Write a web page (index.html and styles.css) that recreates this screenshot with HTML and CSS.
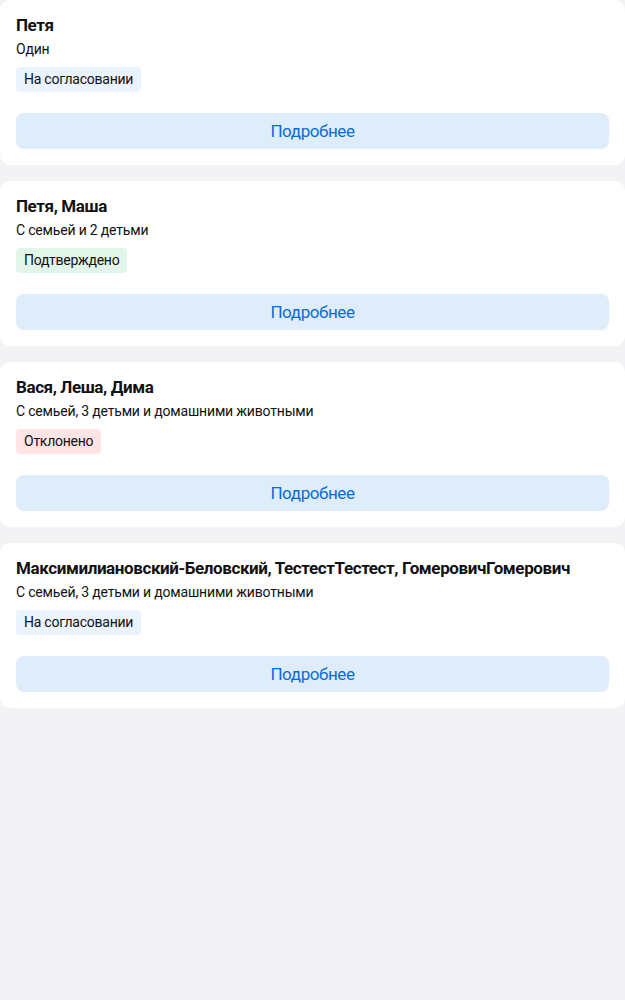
FILE: index.html
```html
<!DOCTYPE html>
<html lang="ru">
<head>
<meta charset="utf-8">
<link rel="stylesheet" href="styles.css">
</head>
<body>
<div class="list">
  <div class="card">
    <div class="title">Петя</div>
    <div class="sub">Один</div>
    <div><span class="badge pending">На согласовании</span></div>
    <button class="more">Подробнее</button>
  </div>
  <div class="card">
    <div class="title">Петя, Маша</div>
    <div class="sub">С семьей и 2 детьми</div>
    <div><span class="badge ok">Подтверждено</span></div>
    <button class="more">Подробнее</button>
  </div>
  <div class="card">
    <div class="title">Вася, Леша, Дима</div>
    <div class="sub">С семьей, 3 детьми и домашними животными</div>
    <div><span class="badge rejected">Отклонено</span></div>
    <button class="more">Подробнее</button>
  </div>
  <div class="card">
    <div class="title">Максимилиановский-Беловский, ТестестТестест, ГомеровичГомерович</div>
    <div class="sub">С семьей, 3 детьми и домашними животными</div>
    <div><span class="badge pending">На согласовании</span></div>
    <button class="more">Подробнее</button>
  </div>
</div>
</body>
</html>
```
FILE: styles.css
```css
html, body {
  margin: 0;
  padding: 0;
  background: #f3f3f5;
  font-family: Roboto, "Liberation Sans", sans-serif;
  color: #111;
}
.list {
  display: flex;
  flex-direction: column;
  gap: 16px;
}
.card {
  background: #fff;
  border-radius: 10px;
  padding: 14px 16px 16px;
  display: flex;
  flex-direction: column;
}
.title {
  font-size: 17px;
  font-weight: 700;
  line-height: 22px;
  letter-spacing: -0.4px;
}
.sub {
  font-size: 14px;
  line-height: 20px;
  margin-top: 3px;
  letter-spacing: -0.18px;
}
.badge {
  display: inline-block;
  margin-top: 8px;
  padding: 0 8px;
  height: 25px;
  line-height: 25px;
  font-size: 14px;
  letter-spacing: -0.25px;
  border-radius: 4px;
}
.pending { background: #ebf3fe; }
.ok { background: #e1f6e9; }
.rejected { background: #fee4e4; }
.more {
  margin-top: 21px;
  height: 36px;
  border: 0;
  border-radius: 8px;
  background: #dfecfa;
  color: #0b6cd6;
  font-family: inherit;
  font-size: 17px;
  letter-spacing: -0.4px;
  cursor: pointer;
}
```
